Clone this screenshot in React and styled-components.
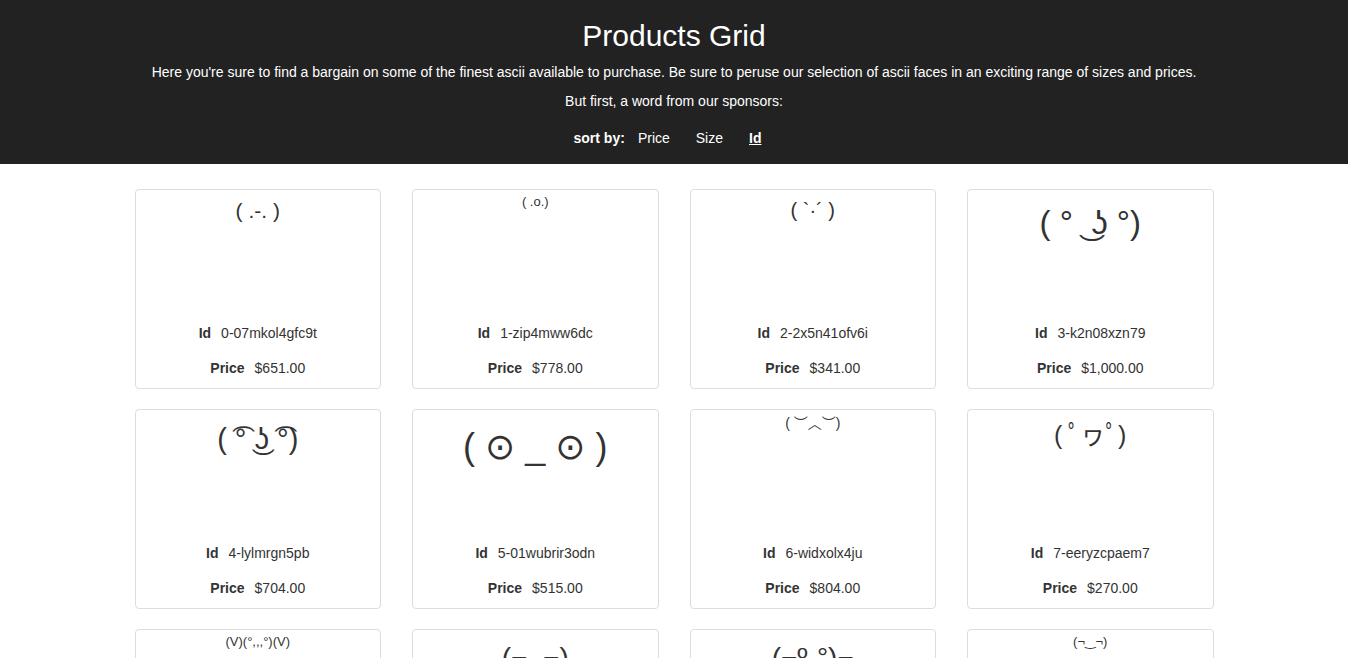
import { useState } from 'react';
import styled, { createGlobalStyle } from 'styled-components';

const GlobalStyle = createGlobalStyle`
    * {
        box-sizing: border-box;
    }
    body {
        margin: 0;
        background: #fff;
        font-family: "Liberation Sans", Arial, "DejaVu Sans", sans-serif;
        font-size: 14px;
        color: #333;
    }
`;

const Header = styled.header`
    background: #222;
    color: #fff;
    text-align: center;
    padding: 19px 0 16px;
`;

const Title = styled.h1`
    font-size: 30px;
    font-weight: 400;
    line-height: 33px;
    margin: 0 0 10px;
`;

const Intro = styled.p`
    margin: 0 0 9px;
    line-height: 20px;
`;

const SortBar = styled.div`
    display: flex;
    justify-content: center;
    align-items: center;
    margin-top: 17px;
    line-height: 20px;
`;

const SortLabel = styled.span`
    font-weight: 700;
`;

const SortButton = styled.button`
    background: none;
    border: none;
    padding: 0 13px;
    font-family: inherit;
    font-size: 14px;
    line-height: 20px;
    color: #fff;
    cursor: pointer;
    font-weight: ${(p) => (p.active ? 700 : 400)};
    text-decoration: ${(p) => (p.active ? 'underline' : 'none')};
`;

const Grid = styled.main`
    width: 1079px;
    margin: 0 auto;
    padding: 25px 0 30px;
    display: grid;
    grid-template-columns: repeat(4, 1fr);
    column-gap: 31px;
    row-gap: 20px;
`;

const Card = styled.div`
    height: 200px;
    border: 1px solid #ddd;
    border-radius: 4px;
    display: flex;
    flex-direction: column;
    align-items: center;
    padding-bottom: 10px;
`;

const Face = styled.div`
    font-family: "Liberation Sans", "DejaVu Sans", "Noto Sans CJK JP", sans-serif;
    font-size: ${(p) => p.size}px;
    line-height: 1.2;
    margin-top: calc(0.45em - 1.5px);
    white-space: nowrap;
`;

const Info = styled.div`
    margin-top: auto;
    display: flex;
    flex-direction: column;
    align-items: center;
    gap: 15px;
`;

const InfoRow = styled.div`
    display: flex;
    gap: 10px;
    line-height: 20px;
`;

const Label = styled.span`
    font-weight: 700;
`;

const products = [
    { id: '0-07mkol4gfc9t', face: '( .-. )', size: 21, price: 651 },
    { id: '1-zip4mww6dc', face: '( .o.)', size: 13, price: 778 },
    { id: '2-2x5n41ofv6i', face: '( `·´ )', size: 20, price: 341 },
    { id: '3-k2n08xzn79', face: '( ° ͜ ʖ °)', size: 33, price: 1000 },
    { id: '4-lylmrgn5pb', face: '( ͡° ͜ʖ ͡°)', size: 29, price: 704 },
    { id: '5-01wubrir3odn', face: '( ⊙ _ ⊙ )', size: 36, price: 515 },
    { id: '6-widxolx4ju', face: '( ︶︿︶)', size: 14, price: 804 },
    { id: '7-eeryzcpaem7', face: '( ﾟヮﾟ)', size: 25, price: 270 },
    { id: '8-9n2kq1fz0a', face: '(V)(°,,,°)(V)', size: 13, price: 512 },
    { id: '9-3hx7ml2pcd', face: '(¬_¬)', size: 28, price: 433 },
    { id: '10-q8ve1bn6tw', face: '(¬º-°)¬', size: 28, price: 920 },
    { id: '11-m4ys0jk2le', face: '(¬‿¬)', size: 13, price: 189 },
];

const formatPrice = (cents) =>
    '$' + cents.toLocaleString('en-US', { minimumFractionDigits: 2, maximumFractionDigits: 2 });

const App = () => {
    const [sort, setSort] = useState('id');

    return (
        <>
            <GlobalStyle />
            <Header>
                <Title>Products Grid</Title>
                <Intro>
                    Here you're sure to find a bargain on some of the finest ascii available to purchase. Be sure to peruse our selection of ascii faces in an exciting range of sizes and prices.
                </Intro>
                <Intro>But first, a word from our sponsors:</Intro>
                <SortBar>
                    <SortLabel>sort by:</SortLabel>
                    <SortButton active={sort === 'price'} onClick={() => setSort('price')}>Price</SortButton>
                    <SortButton active={sort === 'size'} onClick={() => setSort('size')}>Size</SortButton>
                    <SortButton active={sort === 'id'} onClick={() => setSort('id')}>Id</SortButton>
                </SortBar>
            </Header>
            <Grid>
                {products.map((p) => (
                    <Card key={p.id}>
                        <Face size={p.size}>{p.face}</Face>
                        <Info>
                            <InfoRow>
                                <Label>Id</Label>
                                <span>{p.id}</span>
                            </InfoRow>
                            <InfoRow>
                                <Label>Price</Label>
                                <span>{formatPrice(p.price)}</span>
                            </InfoRow>
                        </Info>
                    </Card>
                ))}
            </Grid>
        </>
    );
};

export default App;
